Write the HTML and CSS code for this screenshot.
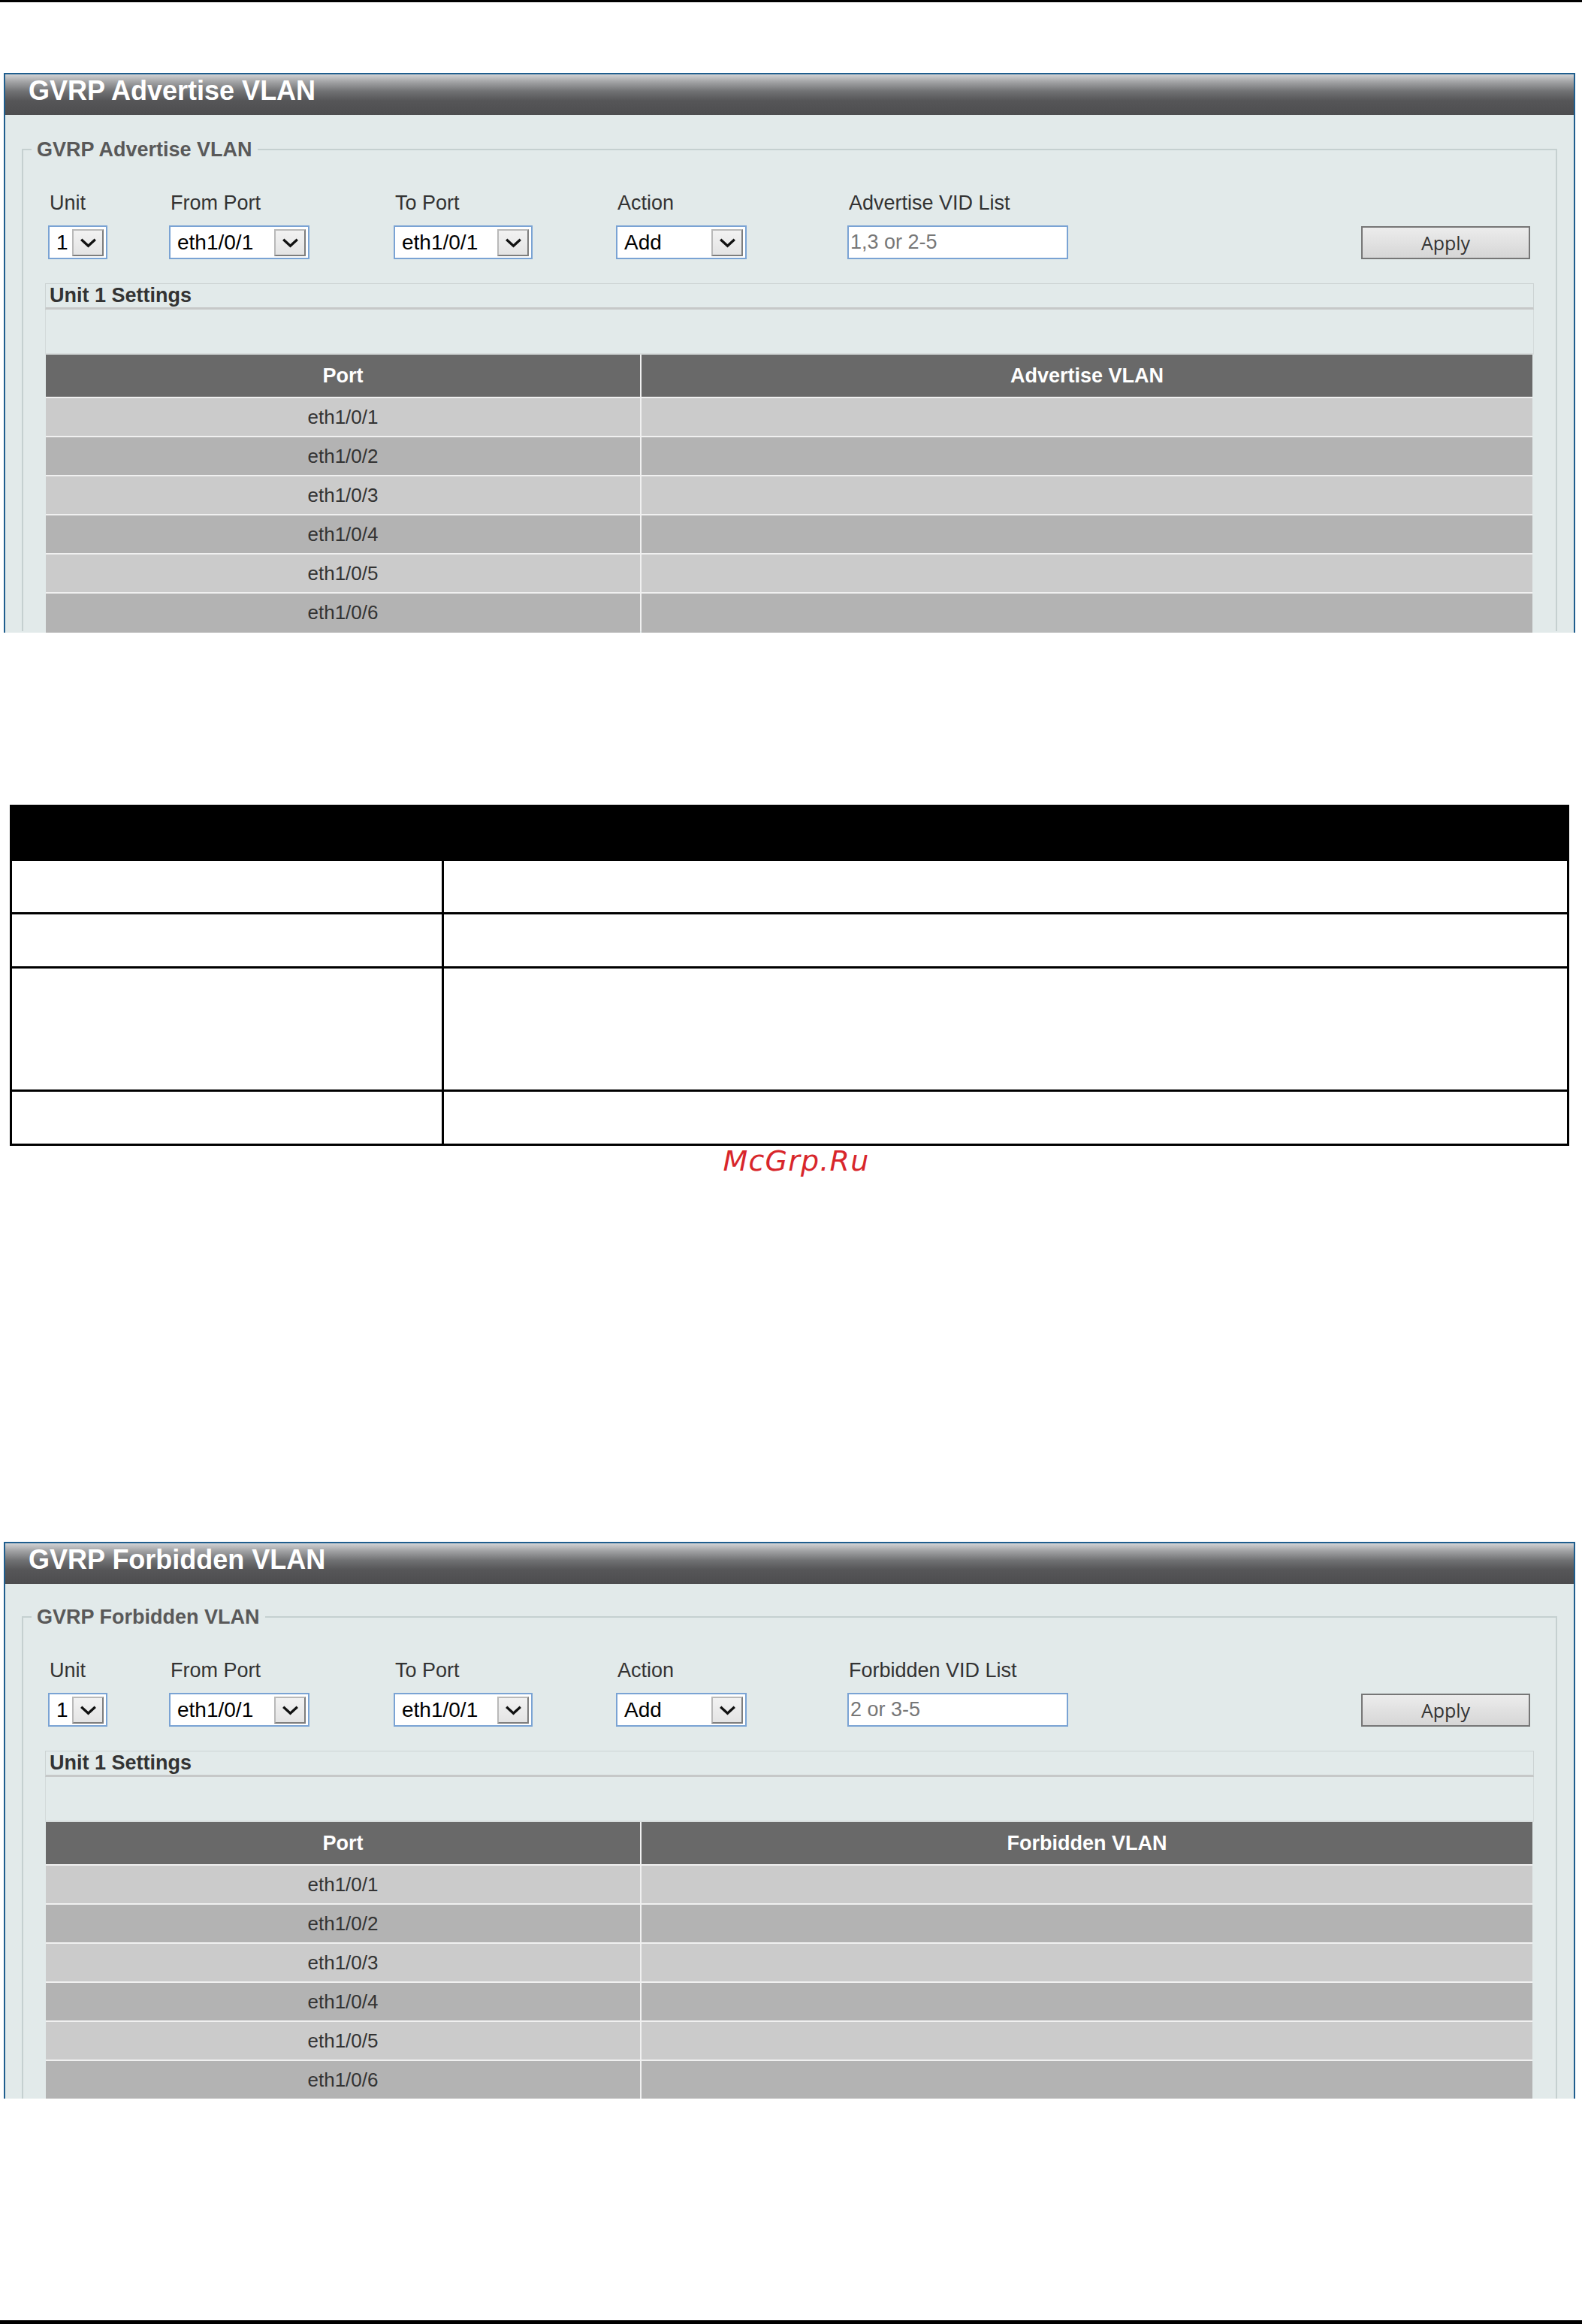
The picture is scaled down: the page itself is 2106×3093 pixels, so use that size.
FILE: index.html
```html
<!DOCTYPE html>
<html lang="en">
<head>
<meta charset="utf-8">
<title>GVRP Advertise / Forbidden VLAN</title>
<link rel="stylesheet" href="styles.css">
</head>
<body>
<div class="page">
  <div class="rule-top"></div>

  <section class="panel panel-first">
    <div class="panel-title">GVRP Advertise VLAN</div>
    <fieldset class="group">
      <legend>GVRP Advertise VLAN</legend>
      <div class="controls">
        <div class="field f-unit">
          <span class="label">Unit</span>
          <div class="select s-unit"><span>1</span><span class="btn"><svg viewBox="0 0 24 14" width="23" height="13"><path d="M2 2 L12 11 L22 2" fill="none" stroke="#111" stroke-width="3.6"/></svg></span></div>
        </div>
        <div class="field f-from">
          <span class="label">From Port</span>
          <div class="select s-port"><span>eth1/0/1</span><span class="btn"><svg viewBox="0 0 24 14" width="23" height="13"><path d="M2 2 L12 11 L22 2" fill="none" stroke="#111" stroke-width="3.6"/></svg></span></div>
        </div>
        <div class="field f-to">
          <span class="label">To Port</span>
          <div class="select s-port2"><span>eth1/0/1</span><span class="btn"><svg viewBox="0 0 24 14" width="23" height="13"><path d="M2 2 L12 11 L22 2" fill="none" stroke="#111" stroke-width="3.6"/></svg></span></div>
        </div>
        <div class="field f-action">
          <span class="label">Action</span>
          <div class="select s-action"><span>Add</span><span class="btn"><svg viewBox="0 0 24 14" width="23" height="13"><path d="M2 2 L12 11 L22 2" fill="none" stroke="#111" stroke-width="3.6"/></svg></span></div>
        </div>
        <div class="field f-vid">
          <span class="label">Advertise VID List</span>
          <div class="input">1,3 or 2-5</div>
        </div>
        <div class="apply">Apply</div>
      </div>
      <div class="unit-head">Unit 1 Settings</div>
      <div class="unit-gap"></div>
      <div class="ports">
        <div class="ph">Port</div><div class="ph">Advertise VLAN</div>
        <div class="pc odd">eth1/0/1</div><div class="pc odd"></div>
        <div class="pc even">eth1/0/2</div><div class="pc even"></div>
        <div class="pc odd">eth1/0/3</div><div class="pc odd"></div>
        <div class="pc even">eth1/0/4</div><div class="pc even"></div>
        <div class="pc odd">eth1/0/5</div><div class="pc odd"></div>
        <div class="pc even last">eth1/0/6</div><div class="pc even last"></div>
      </div>
    </fieldset>
  </section>

  <table class="doc">
    <tr class="r-head"><th></th><th></th></tr>
    <tr class="r-1"><td></td><td></td></tr>
    <tr class="r-2"><td></td><td></td></tr>
    <tr class="r-3"><td></td><td></td></tr>
    <tr class="r-4"><td></td><td></td></tr>
  </table>
  <div class="watermark">McGrp.Ru</div>

  <section class="panel panel-second">
    <div class="panel-title">GVRP Forbidden VLAN</div>
    <fieldset class="group">
      <legend>GVRP Forbidden VLAN</legend>
      <div class="controls">
        <div class="field f-unit">
          <span class="label">Unit</span>
          <div class="select s-unit"><span>1</span><span class="btn"><svg viewBox="0 0 24 14" width="23" height="13"><path d="M2 2 L12 11 L22 2" fill="none" stroke="#111" stroke-width="3.6"/></svg></span></div>
        </div>
        <div class="field f-from">
          <span class="label">From Port</span>
          <div class="select s-port"><span>eth1/0/1</span><span class="btn"><svg viewBox="0 0 24 14" width="23" height="13"><path d="M2 2 L12 11 L22 2" fill="none" stroke="#111" stroke-width="3.6"/></svg></span></div>
        </div>
        <div class="field f-to">
          <span class="label">To Port</span>
          <div class="select s-port2"><span>eth1/0/1</span><span class="btn"><svg viewBox="0 0 24 14" width="23" height="13"><path d="M2 2 L12 11 L22 2" fill="none" stroke="#111" stroke-width="3.6"/></svg></span></div>
        </div>
        <div class="field f-action">
          <span class="label">Action</span>
          <div class="select s-action"><span>Add</span><span class="btn"><svg viewBox="0 0 24 14" width="23" height="13"><path d="M2 2 L12 11 L22 2" fill="none" stroke="#111" stroke-width="3.6"/></svg></span></div>
        </div>
        <div class="field f-vid">
          <span class="label">Forbidden VID List</span>
          <div class="input">2 or 3-5</div>
        </div>
        <div class="apply">Apply</div>
      </div>
      <div class="unit-head">Unit 1 Settings</div>
      <div class="unit-gap"></div>
      <div class="ports">
        <div class="ph">Port</div><div class="ph">Forbidden VLAN</div>
        <div class="pc odd">eth1/0/1</div><div class="pc odd"></div>
        <div class="pc even">eth1/0/2</div><div class="pc even"></div>
        <div class="pc odd">eth1/0/3</div><div class="pc odd"></div>
        <div class="pc even">eth1/0/4</div><div class="pc even"></div>
        <div class="pc odd">eth1/0/5</div><div class="pc odd"></div>
        <div class="pc even last">eth1/0/6</div><div class="pc even last"></div>
      </div>
    </fieldset>
  </section>

  <div class="rule-bottom"></div>
</div>
</body>
</html>
```

FILE: styles.css
```css
* { box-sizing: border-box; }

html, body {
  margin: 0;
  padding: 0;
  background: #ffffff;
}

body {
  font-family: "Liberation Sans", Arial, sans-serif;
  color: #333333;
}

.page {
  height: 3093px;
  display: flex;
  flex-direction: column;
  overflow: hidden;
}

.rule-top {
  flex: none;
  height: 3px;
  background: #000000;
}

.rule-bottom {
  flex: none;
  margin-top: auto;
  height: 5px;
  background: #000000;
}

/* ---------- panel ---------- */
.panel {
  flex: none;
  width: 2092px;
  margin-left: 5px;
  border: 2px solid #1f5e8e;
  border-bottom: none;
  background: #e2eaea;
  overflow: hidden;
}

.panel-first {
  margin-top: 94px;
  height: 745px;
}

.panel-second {
  margin-top: 485px;
  height: 741px;
}

.panel-title {
  height: 54px;
  padding-left: 31px;
  background: linear-gradient(to bottom, #d2d3d5 0%, #a3a4a6 18%, #707173 42%, #565658 65%, #4d4d4f 100%);
  color: #ffffff;
  font-weight: bold;
  font-size: 36px;
  line-height: 44px;
  white-space: nowrap;
}

.group {
  margin: 30px 22px 0 22px;
  padding: 40px 29px 0 29px;
  border: 2px solid #c5d0d0;
  border-bottom: none;
  min-width: 0;
}

.panel-second .group { margin-top: 28px; }

.group legend {
  margin-left: -18px;
  padding: 0 7px;
  font-weight: bold;
  font-size: 27px;
  line-height: 32px;
  color: #595959;
}

/* ---------- controls ---------- */
.controls {
  display: flex;
  align-items: flex-end;
  padding: 0 5px 0 4px;
}

.field {
  display: flex;
  flex-direction: column;
  gap: 15px;
  flex: none;
}

.f-unit { width: 161px; }
.f-from { width: 299px; }
.f-to { width: 296px; }
.f-action { width: 308px; }

.label {
  padding-left: 2px;
  font-size: 27px;
  line-height: 30px;
  color: #333333;
  white-space: nowrap;
}

.select {
  height: 45px;
  display: flex;
  align-items: center;
  justify-content: space-between;
  padding: 0 3px 0 9px;
  border: 2px solid #7aa3d4;
  background: #ffffff;
  font-size: 28px;
  color: #000000;
}

.s-unit { width: 79px; }
.s-port { width: 187px; }
.s-port2 { width: 185px; }
.s-action { width: 174px; }

.btn {
  width: 42px;
  height: 36px;
  display: flex;
  align-items: center;
  justify-content: center;
  background: linear-gradient(to bottom, #f2f2f2, #e4e4e4);
  border: 2px solid;
  border-color: #b9b9b9 #7d7d7d #7d7d7d #b9b9b9;
}

.btn svg { display: block; margin-top: 2px; }

.input {
  width: 294px;
  height: 45px;
  padding-left: 2px;
  border: 2px solid #7aa3d4;
  background: #ffffff;
  font-size: 27px;
  line-height: 41px;
  color: #777777;
}

.apply {
  margin-left: auto;
  width: 225px;
  height: 44px;
  border: 2px solid #767676;
  background: linear-gradient(to bottom, #ececec, #d6d6d6);
  font-family: "Open Sans", "Liberation Sans", sans-serif;
  font-size: 25px;
  line-height: 40px;
  text-align: center;
  color: #333333;
}

/* ---------- unit settings ---------- */
.unit-head {
  margin-top: 32px;
  height: 35px;
  padding-left: 5px;
  border: 1px solid #ccd3d3;
  border-bottom: 3px solid #c6c8c8;
  font-weight: bold;
  font-size: 27px;
  line-height: 31px;
  color: #333333;
}

.unit-gap {
  height: 60px;
  border-left: 1px solid #d3dada;
  border-right: 1px solid #d3dada;
  border-bottom: 2px solid #d8dddd;
}

.ports {
  width: 1979px;
  margin-left: 1px;
  display: grid;
  grid-template-columns: 791px 1186px;
  grid-template-rows: 56px;
  grid-auto-rows: 50px;
  gap: 2px;
  background: #f0f0f0;
}

.ph {
  display: flex;
  align-items: center;
  justify-content: center;
  background: #696969;
  color: #ffffff;
  font-weight: bold;
  font-size: 27px;
}

.pc {
  display: flex;
  align-items: center;
  justify-content: center;
  font-size: 26px;
  color: #333333;
}

.pc.last {
  height: 56px;
  padding-bottom: 6px;
}

.odd { background: #cbcbcb; }
.even { background: #b3b3b3; }

/* ---------- document table ---------- */
.doc {
  flex: none;
  margin-top: 229px;
  margin-left: 13px;
  width: 2076px;
  border-collapse: collapse;
}

.doc th,
.doc td {
  padding: 0;
  border: 3px solid #000000;
}

.doc th { background: #000000; }

.doc th:first-child,
.doc td:first-child { width: 575px; }

.r-head { height: 72px; }
.r-1 { height: 71px; }
.r-2 { height: 72px; }
.r-3 { height: 164px; }
.r-4 { height: 72px; }

.watermark {
  flex: none;
  margin-top: -2px;
  padding-left: 14px;
  text-align: center;
  font-family: "DejaVu Sans", Verdana, sans-serif;
  font-style: italic;
  font-size: 38px;
  line-height: 44px;
  letter-spacing: 1.2px;
  color: #d8262b;
}
```
